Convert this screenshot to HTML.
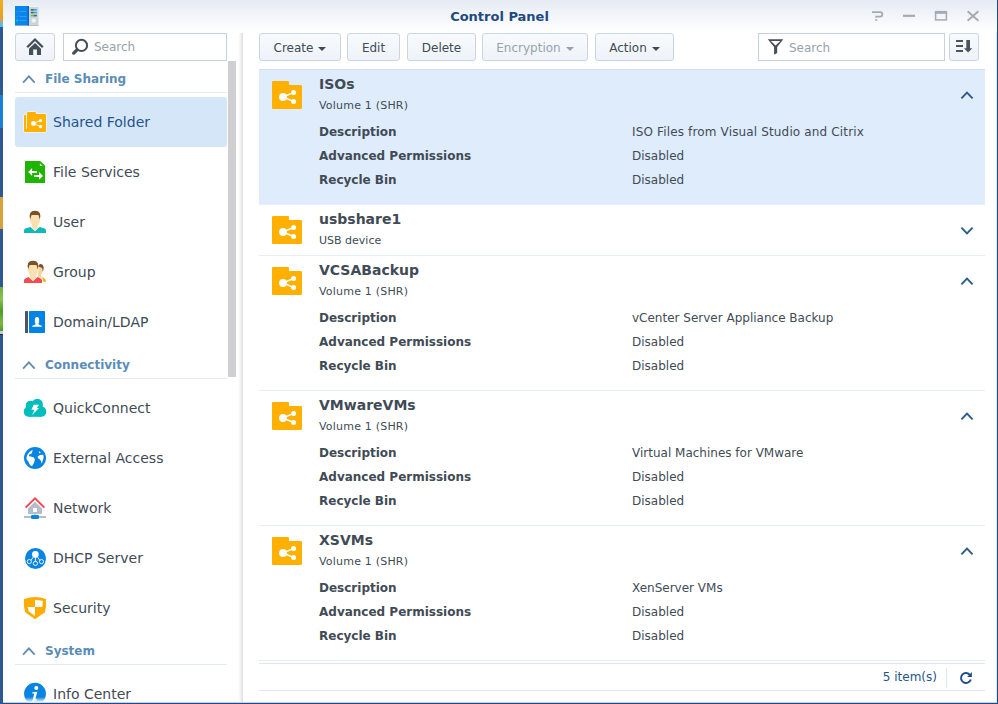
<!DOCTYPE html>
<html><head><meta charset="utf-8">
<style>
*{box-sizing:border-box;margin:0;padding:0}
html,body{width:998px;height:704px;overflow:hidden;background:#fff}
body{font-family:"DejaVu Sans","Liberation Sans",sans-serif;color:#414b55;position:relative}
.abs{position:absolute}
#desk{left:0;top:0;width:3px;height:704px;background:linear-gradient(#f0b01a 0,#e8a020 18px,#d9a050 18px,#d9a050 22px,#6ab8e0 22px,#6ab8e0 27px,#2d5893 27px,#2d5893 95px,#1a80d8 95px,#1a80d8 128px,#2d5893 128px,#2d5893 197px,#d9a13a 197px,#d9a13a 229px,#2d5893 229px,#2d5893 287px,#6fae3a 287px,#8cc152 299px,#4f9a2a 311px,#7db844 323px,#4f9a2a 331px,#c9ccd4 331px,#c9ccd4 334px,#14274d 334px,#14274d 335px,#2d5893 335px)}
#win{left:3px;top:0;width:995px;height:704px;background:#fff;border-right:1px solid #1f4a85;border-bottom:1px solid #1f4a85;box-shadow:inset -1px -1px 0 rgba(31,74,133,.12)}
#tbar{left:3px;top:0;width:994px;height:32px;background:linear-gradient(#e6ebf3,#fff)}
#title{left:3px;top:1px;width:993px;height:32px;line-height:32px;text-align:center;font-weight:bold;font-size:13px;color:#214a80}
.btn{position:absolute;top:33px;height:28px;border:1px solid #c8d5e2;border-radius:3px;background:linear-gradient(#f8fafd,#eef3f9);font-size:12px;line-height:28px;text-align:center;color:#414b55}
.btn.dis{color:#98a2ae}
.caret{display:inline-block;width:0;height:0;border-left:4px solid transparent;border-right:4px solid transparent;border-top:4px solid #414b55;margin-left:5px;vertical-align:1px}
.dis .caret{border-top-color:#98a2ae}
.inp{position:absolute;top:33px;height:28px;border:1px solid #c4d2e0;background:#fff;font-size:12px;line-height:26px;color:#98a2ae}
.sec{position:absolute;left:45px;margin-top:1px;font-size:12px;font-weight:bold;color:#5a8db8;height:20px;line-height:20px}
.secline{position:absolute;left:15px;width:212px;height:1px;background:#e2e9f2}
.nav{position:absolute;left:53px;font-size:14px;height:20px;line-height:20px;color:#414b55}
.row{position:absolute;left:259px;width:726px;border-bottom:1px solid #e6edf5}
.t{position:absolute;left:319px;font-size:14px;font-weight:bold;height:20px;line-height:20px;color:#414b55}
.s{position:absolute;left:319px;margin-top:1px;font-size:11px;height:16px;line-height:16px;color:#414b55}
.l{position:absolute;left:319px;margin-top:1px;font-size:12px;font-weight:bold;height:16px;line-height:16px;color:#414b55}
.v{position:absolute;left:632px;margin-top:1px;font-size:12px;height:16px;line-height:16px;color:#414b55}
svg{position:absolute;overflow:visible}
</style></head><body>
<div id="desk" class="abs"></div>
<div id="win" class="abs"></div>
<div id="tbar" class="abs"></div>
<div id="title" class="abs">Control Panel</div>

<!-- LEFT -->
<div class="btn" style="left:15px;width:40px"></div>
<div class="inp" style="left:63px;width:164px;padding-left:30px">Search</div>
<div class="abs" style="left:228px;top:61px;width:8px;height:316px;background:#cfcfd1"></div>
<div class="abs" style="left:238px;top:33px;width:5px;height:669px;background:linear-gradient(to right,#fff,#f3f3f3 50%,#dedede)"></div>

<div class="sec" style="top:68px">File Sharing</div>
<div class="secline" style="top:92px"></div>
<div class="abs" style="left:15px;top:97px;width:212px;height:50px;background:#d6e6f9;border-radius:3px"></div>
<div class="nav" style="top:112px;color:#24548c">Shared Folder</div>
<div class="nav" style="top:162px">File Services</div>
<div class="nav" style="top:212px">User</div>
<div class="nav" style="top:262px">Group</div>
<div class="nav" style="top:312px">Domain/LDAP</div>
<div class="sec" style="top:354px">Connectivity</div>
<div class="secline" style="top:378px"></div>
<div class="nav" style="top:398px">QuickConnect</div>
<div class="nav" style="top:448px">External Access</div>
<div class="nav" style="top:498px">Network</div>
<div class="nav" style="top:548px">DHCP Server</div>
<div class="nav" style="top:598px">Security</div>
<div class="sec" style="top:640px">System</div>
<div class="secline" style="top:664px"></div>
<div class="nav" style="top:684px">Info Center</div>

<!-- TOOLBAR -->
<div class="btn" style="left:259px;width:82px">Create<span class="caret"></span></div>
<div class="btn" style="left:347px;width:53px">Edit</div>
<div class="btn" style="left:407px;width:69px">Delete</div>
<div class="btn dis" style="left:482px;width:106px">Encryption<span class="caret"></span></div>
<div class="btn" style="left:595px;width:79px">Action<span class="caret"></span></div>
<div class="inp" style="left:758px;width:187px;padding-left:30px;line-height:28px">Search</div>
<div class="btn" style="left:949px;width:30px"></div>

<!-- LIST -->
<div class="abs" style="left:259px;top:69px;width:726px;height:1px;background:#d5dfe9"></div>
<div class="abs" style="left:259px;top:70px;width:726px;height:134px;background:#dfecfb"></div>
<div class="abs" style="left:259px;top:204px;width:726px;height:1px;background:#e8eef5"></div>
<div class="t" style="top:74px">ISOs</div><div class="s" style="top:97px;letter-spacing:.2px">Volume 1 (SHR)</div>
<div class="l" style="top:123px">Description</div><div class="v" style="top:123px;letter-spacing:.15px">ISO Files from Visual Studio and Citrix</div>
<div class="l" style="top:147px">Advanced Permissions</div><div class="v" style="top:147px">Disabled</div>
<div class="l" style="top:171px">Recycle Bin</div><div class="v" style="top:171px">Disabled</div>

<div class="abs" style="left:259px;top:255px;width:726px;height:1px;background:#e6edf5"></div>
<div class="t" style="top:209px">usbshare1</div><div class="s" style="top:232px">USB device</div>

<div class="abs" style="left:259px;top:390px;width:726px;height:1px;background:#e6edf5"></div>
<div class="t" style="top:260px">VCSABackup</div><div class="s" style="top:283px;letter-spacing:.2px">Volume 1 (SHR)</div>
<div class="l" style="top:309px">Description</div><div class="v" style="top:309px">vCenter Server Appliance Backup</div>
<div class="l" style="top:333px">Advanced Permissions</div><div class="v" style="top:333px">Disabled</div>
<div class="l" style="top:357px">Recycle Bin</div><div class="v" style="top:357px">Disabled</div>

<div class="abs" style="left:259px;top:525px;width:726px;height:1px;background:#e6edf5"></div>
<div class="t" style="top:395px">VMwareVMs</div><div class="s" style="top:418px;letter-spacing:.2px">Volume 1 (SHR)</div>
<div class="l" style="top:444px">Description</div><div class="v" style="top:444px">Virtual Machines for VMware</div>
<div class="l" style="top:468px">Advanced Permissions</div><div class="v" style="top:468px">Disabled</div>
<div class="l" style="top:492px">Recycle Bin</div><div class="v" style="top:492px">Disabled</div>

<div class="abs" style="left:259px;top:660px;width:726px;height:1px;background:#e6edf5"></div>
<div class="t" style="top:530px">XSVMs</div><div class="s" style="top:553px;letter-spacing:.2px">Volume 1 (SHR)</div>
<div class="l" style="top:579px">Description</div><div class="v" style="top:579px">XenServer VMs</div>
<div class="l" style="top:603px">Advanced Permissions</div><div class="v" style="top:603px">Disabled</div>
<div class="l" style="top:627px">Recycle Bin</div><div class="v" style="top:627px">Disabled</div>


<!-- ICONS -->
<svg id="ic" width="998" height="704" viewBox="0 0 998 704" style="left:0;top:0">
<defs>
<g id="share">
 <path d="M0 1.2Q0 0 1.2 0H16Q17 0 17 1.2V4H28.8Q30 4 30 5.2V26.8Q30 28 28.800 28H1.2Q0 28 0 26.800Z" fill="#ffb000"/>
 <circle cx="11" cy="16" r="3.900" fill="#fff"/><circle cx="21.600" cy="11.400" r="2.500" fill="#fff"/><circle cx="21.600" cy="20.500" r="2.500" fill="#fff"/>
 <path d="M21.600 11.400L11 16L21.600 20.500" stroke="#fff" stroke-width="1.500" fill="none"/>
</g>
<path id="chu" d="M-5.600 5.800L0 0L5.600 5.800" fill="none" stroke="#2a5a8e" stroke-width="1.900"/>
<path id="schu" d="M-5.800 6.300L0 0L5.800 6.300" fill="none" stroke="#6189ad" stroke-width="1.700"/>
</defs>

<!-- title icon -->
<rect x="15" y="6" width="14" height="19.500" fill="#0a86ea"/>
<rect x="27.500" y="6" width="1.500" height="19.500" fill="#0769c8"/>
<rect x="29" y="6" width="9.500" height="19.500" fill="#cdd4da"/>
<rect x="29" y="6" width="9.500" height="1" fill="#f2f4f6"/>
<rect x="15" y="25.200" width="23.500" height="0.800" fill="#9a8f88" opacity=".6"/>
<rect x="30.800" y="9" width="3" height="1.600" fill="#555d66"/><rect x="33.800" y="9" width="3" height="1.600" fill="#1cb5ee"/>
<rect x="30.800" y="11.800" width="3" height="1.600" fill="#555d66"/><rect x="33.800" y="11.800" width="3" height="1.600" fill="#1cb5ee"/>
<rect x="30.800" y="14.800" width="3" height="1.600" fill="#56c21f"/><rect x="33.800" y="14.800" width="3" height="1.600" fill="#555d66"/>
<circle cx="33.800" cy="20.600" r="2.600" fill="#eaf4fb" stroke="#bcc5cc" stroke-width=".5"/>
<g stroke="#3aa6f4" stroke-width=".7"><path d="M19.500 11.500h7M19.500 16.500h7M19.500 20.500h7"/></g>
<rect x="16.300" y="19.600" width="1.800" height="1.800" fill="#19c3f5"/>
<path d="M16.400 11.600L17 12.200L18.300 10.600M16.400 16.600L17 17.200L18.300 15.600" fill="none" stroke="#3aa6f4" stroke-width=".6"/>

<!-- window controls -->
<g fill="none" stroke="#a4aab3" stroke-width="1.800">
<path d="M872 12.200H880.300Q882.300 12.200 882.300 14.200V14.600Q882.300 16.600 880.300 16.600H876.200V17.800"/>
<path d="M876.200 19.200V20.800" stroke-width="2"/>
<path d="M903 15.800H915" stroke-width="2.200"/>
<rect x="935.600" y="12.600" width="10.800" height="7.300" stroke-width="1.500"/>
<path d="M934.850 12.300H947.150" stroke-width="2.800"/>
<path d="M967.600 11.300L978.400 20.800M978.400 11.300L967.600 20.800" stroke-width="1.800"/>
</g>

<!-- home -->
<g>
<path d="M27.200 47.200L35 39.500L42.800 47.200" fill="none" stroke="#454f59" stroke-width="2.300"/>
<path d="M29 48.700L35 42.900L41 48.700V55H29Z" fill="#454f59"/>
<rect x="33.200" y="49.500" width="3.700" height="5.500" fill="#f4f7fb"/>
</g>
<!-- magnifier -->
<circle cx="81.500" cy="45.400" r="5.600" fill="none" stroke="#454f59" stroke-width="2"/>
<path d="M77 49.900L73.700 53.100" stroke="#454f59" stroke-width="3.300" stroke-linecap="round"/>

<!-- section chevrons -->
<use href="#schu" x="28.900" y="76.300"/>
<use href="#schu" x="28.900" y="362.300"/>
<use href="#schu" x="28.900" y="648.300"/>

<!-- nav: shared folder -->
<path d="M24 115.800Q24 115 24.800 115H27V113Q27 112 28 112H35Q36 112 36 113V114H45Q46 114 46 115V131Q46 132 45 132H25Q24 132 24 131Z" fill="#ffb000" stroke="#fff" stroke-opacity=".8" stroke-width="1.200" paint-order="stroke"/>
<rect x="26.100" y="114.300" width=".9" height="14.700" fill="#fff" opacity=".9"/>
<circle cx="33.400" cy="123.500" r="2.400" fill="#fff"/><circle cx="40.500" cy="120.500" r="1.600" fill="#fff"/><circle cx="40.500" cy="126.700" r="1.600" fill="#fff"/>
<path d="M40.500 120.500L33.400 123.500L40.500 126.700" stroke="#fff" stroke-width=".9" fill="none"/>

<!-- file services -->
<path d="M25 161.600Q25 161 25.600 161H40.200L45 165.600V182.400Q45 183 44.400 183H25.600Q25 183 25 182.400Z" fill="#1fb400"/>
<path d="M39.900 163.200L42.700 165.900H39.900Z" fill="#e4f6e0"/>
<path d="M28.200 172L32.100 168V170.900H36.900V173H32.100V175.900Z" fill="#fff"/>
<path d="M43 175.900L39.100 172V174.900H34V176.900H39.100V179.800Z" fill="#fff"/>

<!-- user -->
<g>
<path d="M24 233.000V230.500Q24 228.800 26 228.300L30.500 226.900L35.000 231.000L39.500 226.900L44 228.300Q46 228.800 46 230.500V233.000Z" fill="#0fb9b9"/>
<path d="M29.800 219.000Q29.600 221.500 31.000 223.000L32.200 226.300V227.800L35.000 230.400L37.800 227.800V226.300L39.000 223.000Q40.400 221.500 40.200 219.000L39.500 214.500H30.500Z" fill="#fde0b0" stroke="#fff" stroke-width=".8" paint-order="stroke"/>
<path d="M30.300 219.400Q27.800 210.800 35.000 210.800Q42.200 210.800 39.700 219.400L38.900 216.200Q38.800 215.000 37.600 215.000H32.400Q31.200 215.000 31.100 216.200Z" fill="#7a5228"/>
</g>

<!-- group -->
<g>
<path d="M37.500 266L42.600 266.500L42.400 271.500L41 275.500L41.800 278L38 277.500Z" fill="#f8d49c"/>
<path d="M38.400 266.500Q38.500 263.800 40.800 264Q44 264.500 43.600 269L42.800 272L42.300 268.500Q41.500 267 39.600 267Z" fill="#7a5228"/>
<path d="M41.800 277.200Q45.800 277.800 46 281.800H43.400Q43.200 279 41.800 277.200Z" fill="#ffae00"/>
<path d="M24 283.000V280.500Q24 278.800 26 278.300L28.500 276.900L33.000 281.000L37.500 276.900L40 278.300Q42 278.800 42 280.500V283.000Z" fill="#f94a4d"/>
<path d="M27.800 269.000Q27.600 271.500 29.000 273.000L30.200 276.300V277.800L33.000 280.400L35.800 277.800V276.300L37.000 273.000Q38.400 271.500 38.200 269.000L37.500 264.500H28.500Z" fill="#fde0b0" stroke="#fff" stroke-width=".8" paint-order="stroke"/>
<path d="M28.300 269.400Q25.800 260.800 33.000 260.800Q40.200 260.800 37.700 269.400L36.900 266.200Q36.800 265.000 35.600 265.000H30.400Q29.200 265.000 29.100 266.200Z" fill="#7a5228"/>
</g>

<!-- domain -->
<rect x="25" y="311" width="3" height="22" rx=".6" fill="#4a5561"/>
<rect x="29" y="311" width="16" height="22" rx=".8" fill="#0083e6"/>
<path d="M32 326.800Q32 325.600 33.500 325.200L35.800 324.300Q35.200 323.300 34.900 322Q34.300 317 37 317Q39.700 317 39.100 322Q38.800 323.300 38.200 324.300L40.500 325.200Q42 325.600 42 326.800Z" fill="#fff"/>

<!-- quickconnect cloud -->
<g fill="#02bdbd">
<circle cx="30.500" cy="405.500" r="4.800"/><circle cx="37.300" cy="404.500" r="5.700"/><circle cx="29" cy="411.500" r="5.300"/><circle cx="41" cy="411.500" r="5.300"/>
<rect x="29" y="406" width="12" height="10.800"/>
</g>
<path d="M33.700 404.800H39L36.900 408H39L32 415L34.500 409.800H31.400Z" fill="#fff"/>

<!-- globe -->
<circle cx="35" cy="458" r="11" fill="#0a84e1"/>
<path d="M32.600 449.800L29.200 452.200Q26.800 455 26.500 457.500L26.600 459.300L28.600 461.900L29.900 465L32 466.200L34 462.700L34.900 459.600L33.700 457.300L30.600 456.500L28.900 455.900L29.200 454.500L31.800 453.400L32.300 451.400Z" fill="#fff"/>
<path d="M37.700 456.500L40 455L43.200 454.800Q43.900 457 43.400 458.800L41.600 463.700L40.900 461L40 459.600L38 458.200Z" fill="#fff"/>
<path d="M38.900 451.300L40.900 452.200L39.100 453.600Z" fill="#fff"/>

<!-- network -->
<path d="M25.600 507.600L35 498.400L44.400 507.600" fill="none" stroke="#f8474a" stroke-width="2"/>
<path d="M28 508.500L35 501.700L42 508.500V514H28Z" fill="#b4bdc9"/>
<rect x="33" y="508" width="4" height="4" fill="#fff"/>
<rect x="34.400" y="514" width="1.200" height="1.500" fill="#b4bdc9"/>
<rect x="24" y="516" width="22" height="2" fill="#b4bdc9"/>
<rect x="31" y="515" width="8" height="4" rx="1.200" fill="#0a84e1"/>

<!-- dhcp -->
<circle cx="35.500" cy="558.500" r="10.500" fill="#0a84e1"/>
<circle cx="35.400" cy="554.400" r="3.300" fill="#fff"/>
<g fill="none" stroke="#fff" stroke-width=".9">
<circle cx="29.300" cy="561.600" r="2.100"/><circle cx="35.400" cy="563.400" r="2.100"/><circle cx="41.500" cy="561.600" r="2.100"/>
<path d="M35.400 557V561.300M33.300 557L31 560.300M37.500 557L39.800 560.300"/>
</g>

<!-- security -->
<path d="M24 599Q35 595 46 599Q46.700 606.500 44.900 612.300L35 619.200L25.100 612.300Q23.300 606.500 24 599Z" fill="#ffac00"/>
<path d="M35 600Q39.500 600 43 601L42.300 607H35Z" fill="#fff"/>
<path d="M27.700 607H35V616L28.700 611.300Z" fill="#fff"/>

<!-- info -->
<defs><linearGradient id="ig" x1="0" y1="0" x2="0" y2="1" gradientUnits="objectBoundingBox"><stop offset="0" stop-color="#0a84e1"/><stop offset=".66" stop-color="#0a84e1"/><stop offset=".9" stop-color="#fff"/></linearGradient></defs>
<circle cx="35" cy="693.700" r="10.900" fill="url(#ig)"/>
<circle cx="36.300" cy="688" r="2" fill="#fff"/>
<path d="M32.500 692.300L37.300 691.700L35.300 699.500L37 698.800L36.500 700.500L32 702L34.300 693.600L32.200 693.500Z" fill="#fff"/>

<!-- filter icon -->
<path d="M767.800 39.200H783.300L777.200 46.900V52.900L774.100 54.800V46.900ZM770.900 41H780.300L775.600 45.500Z" fill="#454f59" fill-rule="evenodd"/>
<!-- sort icon -->
<g fill="#4b555f">
<rect x="956" y="40" width="7" height="2"/><rect x="956" y="45" width="7" height="2"/><rect x="956" y="50" width="7" height="2"/>
<path d="M966.300 40H970V48.300H972.300L968.100 52.400L964 48.300H966.300Z"/>
</g>

<!-- list icons -->
<use href="#share" x="272" y="81"/>
<use href="#share" x="272" y="216"/>
<use href="#share" x="272" y="267"/>
<use href="#share" x="272" y="402"/>
<use href="#share" x="272" y="537"/>
<use href="#chu" x="967" y="92.500"/>
<use href="#chu" x="967" y="227.500" transform="rotate(180 967 230.500)"/>
<use href="#chu" x="967" y="278.500"/>
<use href="#chu" x="967" y="413.500"/>
<use href="#chu" x="967" y="548.500"/>

<!-- refresh -->
<path d="M970.100 675.100A5 5 0 1 0 970.800 679.500" fill="none" stroke="#1f4e8c" stroke-width="2"/>
<path d="M971.900 672V677H967.200Z" fill="#1f4e8c"/>
</svg>

<!-- FOOTER -->
<div class="abs" style="left:259px;top:663px;width:726px;height:1px;background:#dfe8f1"></div>
<div class="abs" style="left:259px;top:690px;width:726px;height:1px;background:#dfe8f1"></div>
<div class="abs" style="left:946px;top:668px;width:1px;height:20px;background:#dfe8f1"></div>
<div class="abs" style="left:799px;top:668px;width:138px;height:18px;line-height:18px;font-size:12px;text-align:right;color:#24548c">5 item(s)</div>
<div class="abs" style="left:3px;top:702px;width:995px;height:1px;background:rgba(31,74,133,.15)"></div>
<div class="abs" style="left:3px;top:703px;width:995px;height:1px;background:#1f4a85"></div>
</body></html>
